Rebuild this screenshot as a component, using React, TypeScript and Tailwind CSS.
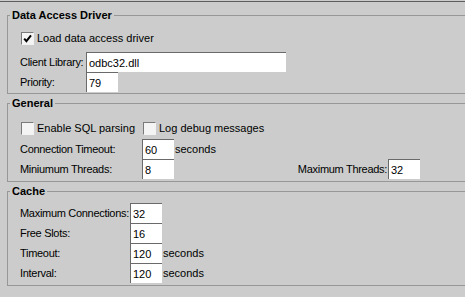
import type { ReactNode } from 'react';

const font = { fontFamily: '"Liberation Sans", Arial, sans-serif' };

function Box({ value, w = 'w-[32px]' }: { value: string; w?: string }) {
  return (
    <input
      readOnly
      value={value}
      className={`${w} h-[20px] shrink-0 bg-white border-t border-l border-[#6a6a6a] px-[2px] text-[11px] text-black outline-none`}
    />
  );
}

function Check({ checked, label }: { checked?: boolean; label: string }) {
  return (
    <div className="flex items-center h-[13px] whitespace-nowrap">
      <div className="w-[13px] h-[13px] flex items-center justify-center border-t border-l border-[#7a7a7a] border-b border-r border-b-[#f2f2f2] border-r-[#f2f2f2] bg-[#f4f4f4]">
        {checked && (
          <svg width="9" height="9" viewBox="0 0 9 9">
            <path d="M1.2 4.6 L3.4 7.2 L8 1.4" fill="none" stroke="#000" strokeWidth="2" />
          </svg>
        )}
      </div>
      <span className="ml-[3px] text-[11px] leading-[13px]">{label}</span>
    </div>
  );
}

function Row({ label, labelW, children }: { label: string; labelW: string; children: ReactNode }) {
  return (
    <div className="flex items-center h-[20px] whitespace-nowrap">
      <span className={`${labelW} shrink-0 text-[11px] leading-[13px] tracking-[-0.3px]`}>{label}</span>
      {children}
    </div>
  );
}

function Group({ title, className, children }: { title: string; className: string; children: ReactNode }) {
  return (
    <fieldset className={`ml-[7px] w-[480px] border border-[#979797] ${className}`}>
      <legend className="ml-[2px] px-[2px] text-[11px] leading-[13px] font-bold text-black">{title}</legend>
      {children}
    </fieldset>
  );
}

export default function App() {
  return (
    <div className="w-[465px] h-[297px] overflow-hidden bg-[#cbcccb] text-black pt-[1px]" style={font}>
      <div className="h-px bg-[#5e5e5e]" />

      {/* Data Access Driver */}
      <Group title="Data Access Driver" className="mt-[7px]">
        <div className="pl-[12px] pt-[10px] pb-[1px]">
          <div className="ml-[1px]">
            <Check checked label="Load data access driver" />
          </div>
          <div className="mt-[7px]">
            <Row label="Client Library:" labelW="w-[66px]">
              <Box value="odbc32.dll" w="w-[200px]" />
            </Row>
            <Row label="Priority:" labelW="w-[66px]">
              <Box value="79" />
            </Row>
          </div>
        </div>
      </Group>

      {/* General */}
      <Group title="General" className="mt-[3px]">
        <div className="pl-[12px] pt-[12px] pb-[2px]">
          <div className="flex ml-[1px]">
            <div className="w-[122px]">
              <Check label="Enable SQL parsing" />
            </div>
            <Check label="Log debug messages" />
          </div>
          <div className="mt-[4px]">
            <Row label="Connection Timeout:" labelW="w-[122px]">
              <Box value="60" />
              <span className="ml-[1px] text-[11px]">seconds</span>
            </Row>
            <Row label="Miniumum Threads:" labelW="w-[122px]">
              <Box value="8" />
              <span className="ml-[114px] w-[100px] pr-[1px] text-right text-[11px] tracking-[-0.3px]">Maximum Threads:</span>
              <Box value="32" />
            </Row>
          </div>
        </div>
      </Group>

      {/* Cache */}
      <Group title="Cache" className="mt-[3px]">
        <div className="pl-[12px] pt-[5px] pb-[2px]">
          <Row label="Maximum Connections:" labelW="w-[110px]">
            <Box value="32" />
          </Row>
          <Row label="Free Slots:" labelW="w-[110px]">
            <Box value="16" />
          </Row>
          <Row label="Timeout:" labelW="w-[110px]">
            <Box value="120" />
            <span className="ml-[1px] text-[11px]">seconds</span>
          </Row>
          <Row label="Interval:" labelW="w-[110px]">
            <Box value="120" />
            <span className="ml-[1px] text-[11px]">seconds</span>
          </Row>
        </div>
      </Group>
    </div>
  );
}
